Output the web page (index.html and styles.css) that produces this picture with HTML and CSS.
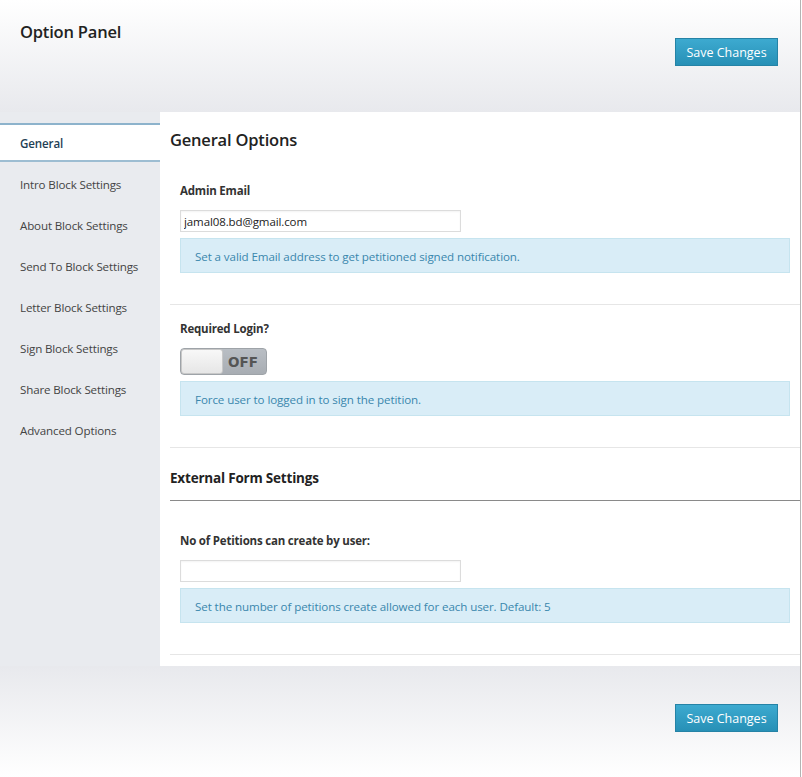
FILE: index.html
```html
<!DOCTYPE html>
<html>
<head>
<meta charset="utf-8">
<link rel="stylesheet" href="styles.css">
</head>
<body>
<div class="panel">
  <header class="top">
    <h1 class="title">Option Panel</h1>
    <button class="save">Save Changes</button>
  </header>
  <div class="main">
    <nav class="side">
      <a class="item active">General</a>
      <a class="item">Intro Block Settings</a>
      <a class="item">About Block Settings</a>
      <a class="item">Send To Block Settings</a>
      <a class="item">Letter Block Settings</a>
      <a class="item">Sign Block Settings</a>
      <a class="item">Share Block Settings</a>
      <a class="item">Advanced Options</a>
    </nav>
    <section class="content">
      <h2 class="heading">General Options</h2>
      <div class="field">
        <div class="label">Admin Email</div>
        <input class="text" type="text" value="jamal08.bd@gmail.com">
        <div class="info">Set a valid Email address to get petitioned signed notification.</div>
      </div>
      <div class="field">
        <div class="label">Required Login?</div>
        <div class="toggle"><span class="knob"></span><span class="off">OFF</span></div>
        <div class="info">Force user to logged in to sign the petition.</div>
      </div>
      <h3 class="sub">External Form Settings</h3>
      <div class="field">
        <div class="label">No of Petitions can create by user:</div>
        <input class="text" type="text" value="">
        <div class="info">Set the number of petitions create allowed for each user. Default: 5</div>
      </div>
    </section>
  </div>
  <footer class="bottom">
    <button class="save">Save Changes</button>
  </footer>
</div>
</body>
</html>
```
FILE: styles.css
```css
html, body { margin: 0; padding: 0; background: #fff; }
body { font-family: "Open Sans", "Noto Sans", sans-serif; color: #333; }
.panel { width: 800px; border-right: 1px solid #b3b3b3; }
.top {
  height: 112px;
  background: linear-gradient(#ffffff, #e8e9ed);
  display: flex; justify-content: space-between; align-items: flex-start;
  padding: 0 22px 0 20px;
}
.title { margin: 20px 0 0; font-size: 16.5px; font-weight: 600; color: #222; letter-spacing: -0.2px; }
.save {
  margin-top: 38px;
  width: 103px; height: 28px;
  background: linear-gradient(#3daad0, #2790b6);
  border: 1px solid #2583a6;
  color: #fff; font-family: inherit; font-size: 12.5px;
  padding: 0; border-radius: 0;
}
.main { display: flex; }
.side { width: 160px; background: #e9ebef; padding-top: 11px; display: flex; flex-direction: column; }
.item { display: block; height: 41px; line-height: 41px; padding-left: 20px; font-size: 11.6px; color: #444; letter-spacing: -0.15px; }
.item.active {
  background: #fff; height: 35px; line-height: 37px; font-weight: 600; color: #1f3f55;
  border-top: 2px solid #8db3cc; border-bottom: 2px solid #9dbdd2;
  margin-bottom: 2px;
}
.content { flex: 1; padding: 0 0 11px 10px; background: #fff; }
.heading { margin: 16px 0 0; font-size: 16.5px; font-weight: 600; color: #222; letter-spacing: -0.2px; height: 39px; }
.field { padding: 16px 10px 31px; border-bottom: 1px solid #e6e6e6; }
.label { font-size: 11.5px; font-weight: 700; color: #333; height: 17px; margin-bottom: 10px; letter-spacing: -0.2px; }
.text {
  display: block; box-sizing: border-box; width: 281px; height: 22px;
  border: 1px solid #dcdcdc; background: #fff; padding: 0 3px;
  font-family: inherit; font-size: 11.5px; color: #222; margin: 0 0 6px;
  box-shadow: inset 0 1px 2px rgba(0,0,0,0.05); letter-spacing: -0.1px;
}
.info {
  box-sizing: border-box; height: 35px; line-height: 35px;
  background: #d9edf7; border: 1px solid #c6e4ef; padding-left: 14px;
  font-size: 11.6px; color: #3a87ad; letter-spacing: -0.1px;
}
.toggle {
  width: 87px; height: 27px; box-sizing: border-box; margin-bottom: 6px;
  border-radius: 4px; background: linear-gradient(#b9bec4, #a8adb3);
  border: 1px solid #9ea3a8; position: relative; display: flex; align-items: center; justify-content: flex-end;
}
.knob {
  position: absolute; left: 0; top: 0; bottom: 0; width: 42px;
  background: linear-gradient(#f8f8f8, #e6e6e6); border-radius: 3px; border: 1px solid #c8c8c8; box-sizing: border-box;
}
.off { font-family: "DejaVu Sans", sans-serif; font-weight: 700; font-size: 13.5px; color: #555; padding-right: 8px; }
.sub {
  margin: 21px 0 0; font-size: 13.5px; font-weight: 700; color: #222; letter-spacing: -0.2px;
  height: 31px; border-bottom: 1px solid #8a8a8a; line-height: 18px; padding-top: 0;
}
.sub + .field { padding-top: 32px; }
.bottom {
  height: 112px;
  background: linear-gradient(#e8e9ed, #ffffff);
  display: flex; justify-content: flex-end; padding-right: 22px;
}
```
